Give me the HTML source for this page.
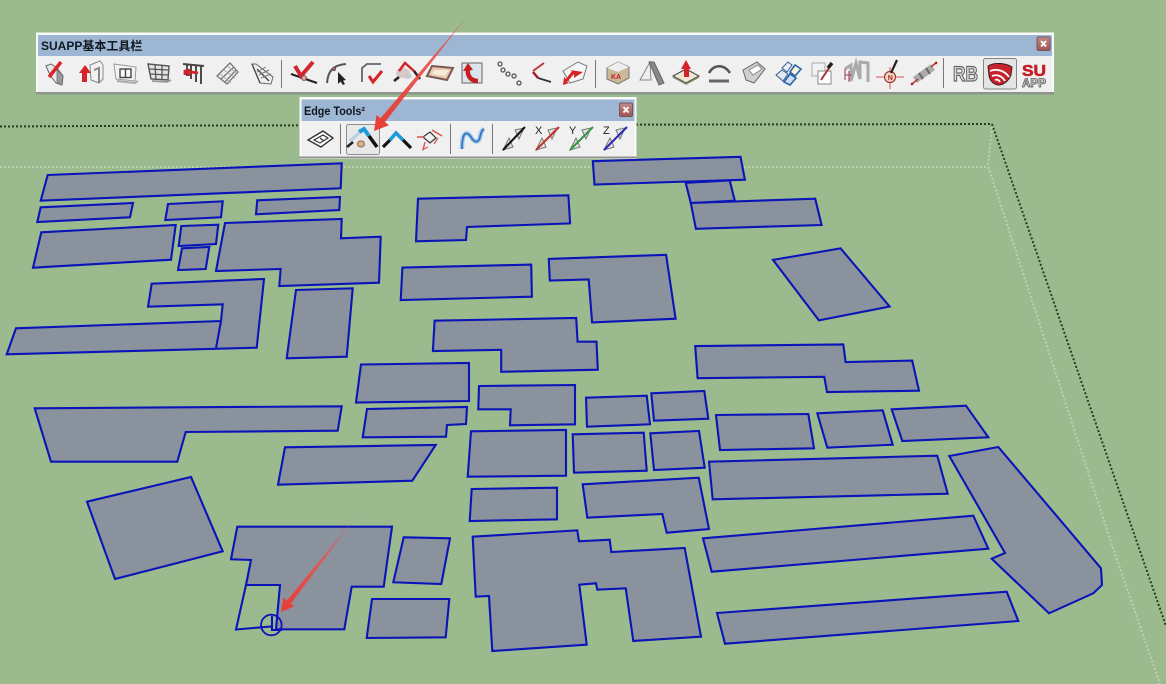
<!DOCTYPE html>
<html><head><meta charset="utf-8"><title>SUAPP</title>
<style>
html,body{margin:0;padding:0;background:#9bbb8f;width:1166px;height:684px;overflow:hidden}
svg{display:block;filter:blur(.35px)}
text{font-family:"Liberation Sans","Noto Sans CJK SC",sans-serif}
.b{fill:#8a939d;stroke:#0a14b8;stroke-width:2.100;stroke-linejoin:miter}
.l{fill:none;stroke:#0a14b8;stroke-width:2.100}
</style></head><body>
<svg width="1166" height="684" viewBox="0 0 1166 684" xmlns="http://www.w3.org/2000/svg">
<defs>
<linearGradient id="a1" gradientUnits="userSpaceOnUse" x1="470" y1="13" x2="374" y2="131"><stop offset="0" stop-color="#e8504a" stop-opacity=".35"/><stop offset=".35" stop-color="#e8504a" stop-opacity=".9"/><stop offset="1" stop-color="#e83c38"/></linearGradient>
<linearGradient id="a2" gradientUnits="userSpaceOnUse" x1="356" y1="517" x2="281" y2="612"><stop offset="0" stop-color="#e8504a" stop-opacity=".2"/><stop offset=".45" stop-color="#e8504a" stop-opacity=".85"/><stop offset="1" stop-color="#e83c38"/></linearGradient>
<linearGradient id="cl" x1="0" y1="0" x2="0" y2="1"><stop offset="0" stop-color="#c48a88"/><stop offset="1" stop-color="#a5524f"/></linearGradient>
</defs>
<rect width="1166" height="684" fill="#9bbb8f"/>

<!-- ground lines -->
<g fill="none" stroke-width="2" stroke-dasharray="2 2">
<path d="M0 167H988" stroke="#bdd2ad"/>
<path d="M992 127L988 166L1112 545L1160 684" stroke="#bdd2ad"/>
<path d="M0 126.500L200 125.500L992 124" stroke="#22401f"/>
<path d="M992 124L1166 626" stroke="#22401f"/>
</g>

<!-- buildings -->
<polygon class="b" points="47.700,175 341.700,163.300 340.700,188.300 40.700,200.700"/>
<polygon class="b" points="40.700,207.300 133,203 130,217.300 37.300,222"/>
<polygon class="b" points="168,204 222.700,201.300 221,217.300 165.300,220"/>
<polygon class="b" points="257.300,200.300 340,197 339.300,210 256,214.300"/>
<polygon class="b" points="41.300,232.300 175.700,225 171,259.700 33,267.700"/>
<polygon class="b" points="181.300,226 218.300,224.700 216,244 178.700,246"/>
<polygon class="b" points="182,248.300 209.300,247 205.700,269 178,270"/>
<polygon class="b" points="225,223 341.700,219 341,238.300 380.700,236.700 379,282.700 279.300,286 280.700,269 216,271"/>
<polygon class="b" points="151.700,283.700 264,279 256.700,347.700 6.700,354.300 16,328.300 221,321 222.700,304.300 148,306.700"/>
<path class="l" d="M221 321L216 348.300"/>
<polygon class="b" points="296,290 352.700,288.300 346.700,356.700 286.700,358.300"/>
<polygon class="b" points="592.800,161.200 740.500,156.800 744.900,179.700 594.500,184.500"/>
<polygon class="b" points="685.700,182.800 729.700,180.400 734.800,200.700 690.800,203"/>
<polygon class="b" points="690.800,203 815.200,198.700 821.600,225 695.900,228.800"/>
<polygon class="b" points="418,198.700 568.400,195.300 570.100,223.400 467,227 466,240 416,241.300"/>
<polygon class="b" points="402.400,267.600 531.200,264.600 531.900,296.700 400.700,300.100"/>
<polygon class="b" points="548.800,258.900 666.100,254.800 675.600,318.700 592.100,322.400 588.700,279.500 549.800,280.500"/>
<polygon class="b" points="434.600,320.700 576.200,318 577.600,341.700 596.500,341.700 597.800,369.700 501.200,371.800 501.200,349.800 432.900,351.100"/>
<polygon class="b" points="773,259.900 840.600,248.400 889.600,306.500 818.900,320.400"/>
<polygon class="b" points="695.200,346.100 843.300,344.400 845.600,362 912.200,360.600 919,390.700 827,392 824.300,376.800 697.600,378.200"/>
<polygon class="b" points="34.700,408.300 341.700,406.300 337.700,430.700 185.700,432 177.300,461.700 51,461.700"/>
<polygon class="b" points="361,364.500 469,363 469,401 356,402.500"/>
<polygon class="b" points="367,409 467,407 466,424 447,425 446,436.700 362.700,437.300"/>
<polygon class="b" points="285,447.300 435.700,445 412.300,480.700 278,484.700"/>
<polygon class="b" points="87,501.700 191,477 222.700,551.300 115,579"/>
<polygon class="b" points="237.300,526.700 392,526.700 383.700,586.700 351.700,586.700 344.300,629.300 281.700,629.300 276,629.300 280,585 246,585 251,560 231,559.300"/>
<path class="l" d="M246 585L236 629.500L271 626.500M272 616V630H282"/>
<circle cx="271.300" cy="625" r="10.300" fill="none" stroke="#0a14b8" stroke-width="1.800"/>
<polygon class="b" points="403.700,537.300 450,538.300 441.300,584 393.300,582.300"/>
<polygon class="b" points="372,599 449.300,599 445.700,637.300 366.700,638"/>
<polygon class="b" points="479,386 575,385 575,424.300 510,425.300 510.700,409.300 478.300,409.300"/>
<polygon class="b" points="586,397.700 646.700,395.700 650,424.300 587,426.700"/>
<polygon class="b" points="651.300,393.300 704.300,391 708.300,418.700 654,420.700"/>
<polygon class="b" points="471,431.300 566,430 566,475.700 467.700,476.700"/>
<polygon class="b" points="572.700,434.300 643.700,432.700 646.700,470.700 574,472.700"/>
<polygon class="b" points="650.300,433.300 699,431 704.700,467.700 654,470"/>
<polygon class="b" points="471.700,489 557,487.700 557,519.300 469.700,521"/>
<polygon class="b" points="582.700,484.300 698.700,477.700 709,529 666.700,532.700 662.300,514 587.300,517.700"/>
<polygon class="b" points="472.700,536.700 577.300,530.300 579,541.300 609.700,539.700 611.300,552 684.700,548 701,636.700 633.300,641 625.700,588.300 597.300,589.700 596,583.300 579.300,584.700 586.700,644.700 492.300,651 489,596 475.700,596.700"/>
<polygon class="b" points="716,415 808.300,414 814,448.300 720,450"/>
<polygon class="b" points="817.300,413.300 882.700,410.300 892.700,444.700 827.300,447.700"/>
<polygon class="b" points="891.700,409.300 966,405.700 988.300,437.300 902.300,441"/>
<polygon class="b" points="709,461.700 937.300,455.700 947.700,493.700 712.700,499.300"/>
<polygon class="b" points="703,538.300 973.300,515.700 988.300,548.700 711.700,571.700"/>
<polygon class="b" points="717,613 1006.700,591.700 1018.300,621 725,643.700"/>
<polygon class="b" points="949.300,456 998.300,447 1101,568.300 1102,585 1093.300,593.300 1049,613.300 991.700,558.700 1005,553"/>

<!-- toolbar 1 -->
<rect x="36" y="32.500" width="1018" height="62" fill="#fafafa"/>
<rect x="38" y="35" width="1014" height="21" fill="#9db6d3"/>
<rect x="38" y="56" width="1014" height="36" fill="#f0f0f0"/>
<rect x="36" y="92" width="1018" height="2.500" fill="#8e948c"/>
<text x="41" y="50" font-size="12" font-weight="700" fill="#101820">SUAPP基本工具栏</text>
<rect x="1037" y="37" width="13" height="13.500" rx="1.500" fill="url(#cl)" stroke="#6b5a5a"/>
<path d="M1041 41l5 5.500M1046 41l-5 5.500" stroke="#fff" stroke-width="1.800"/>
<path d="M281.500 60V88M595.500 60V88M943.500 58V88" stroke="#777" stroke-width="1"/>

<!-- toolbar 1 icons -->
<g transform="translate(57,73)"><polygon points="-11,-7 -6,-9 0,-5 6,3 5,12 -1,10 -7,2" fill="#e8e8e8" stroke="#666"/><polygon points="0,-4 6,3 5,12 0,9" fill="#999" stroke="#666" stroke-width=".7"/><path d="M-8 4L4 -11" stroke="#d9262b" stroke-width="3.500"/></g>
<g transform="translate(91,73)"><polygon points="-1,-8 9,-12 12,-8 12,6 8,10 0,7" fill="#f2f2f2" stroke="#888"/><path d="M3 -3L8 -5V10" fill="none" stroke="#888" stroke-width="2"/><polygon points="-6,-8 -12,0 -9,0 -9,9 -4,9 -4,0 0,0" fill="#d4232a"/></g>
<g transform="translate(125,73)"><polygon points="-11,-9 11,-6 10,8 -9,6" fill="#f3f3f3" stroke="#999"/><rect x="-5" y="-4" width="11" height="8.500" fill="#f8f8f8" stroke="#444" stroke-width="1.400"/><path d="M0.500 -4V4" stroke="#444" stroke-width="1.400"/><path d="M-8 8L10 10L13 8" stroke="#aaa" stroke-width="2" fill="none"/></g>
<g transform="translate(159,73)"><polygon points="-11,-9 10,-7 9,7 -8,6" fill="#e4e4e4" stroke="#555" stroke-width="1.400"/><path d="M-4 -8.500L-3 7M3 -8L3 7M-10 -4L10 -3M-9 1L9.500 2" stroke="#555" stroke-width="1.300"/><path d="M-7 8L8 9L12 7" stroke="#999" stroke-width="1.800" fill="none"/></g>
<g transform="translate(193,73)"><path d="M-10 -9L11 -7M-6 -9V3M-2 -8V6M3 -7V9M8 -7V11" stroke="#444" stroke-width="1.900" fill="none"/><path d="M-9 -2L5 0M-4 -4V3M-8 -3V2" stroke="#d4232a" stroke-width="2.800" fill="none"/></g>
<g transform="translate(228,73)"><polygon points="-11,3 2,-10 10,-1 -1,11" fill="#f0f0f0" stroke="#777" stroke-width="1.300"/><path d="M-7 6L6 -6M-3 9L8 -3" stroke="#777" stroke-width="1.300" fill="none"/><path d="M-8 1L3 10M-4 -3L7 5M-1 -7L10 1" stroke="#aaa" fill="none"/></g>
<g transform="translate(262,73)"><polygon points="-10,-9 -6,-9 11,4 9,11 -2,10" fill="#efefef" stroke="#666"/><path d="M-10 -9L-2 10M-5 -4L7 8" stroke="#444" stroke-width="1.300" fill="none"/><path d="M-3 2L7 -3M-1 5L9 1M-5 -1L4 -6" stroke="#777" fill="none"/></g>

<g transform="translate(304,73)"><path d="M-13 1L13 10" stroke="#222" stroke-width="2"/><path d="M-9 -7L-3 3L9 -11" stroke="#d4232a" stroke-width="4" fill="none"/><circle cx="0" cy="5" r="2.500" fill="#d9a0a0" stroke="#644" stroke-width=".8"/></g>
<g transform="translate(338,73)"><path d="M-11 10C-10 -2 -5 -8 8 -9" stroke="#555" stroke-width="2" fill="none"/><circle cx="-4" cy="-4" r="1.800" fill="#a66" stroke="#444" stroke-width=".6"/><polygon points="0,-1 0,11 2.500,8.500 5,12 7,11 5,7.500 8,7" fill="#222"/></g>
<g transform="translate(372,73)"><path d="M-10 9V-5L-5 -9H9" stroke="#666" stroke-width="1.800" fill="none"/><path d="M-3 3L1 9L10 -2" stroke="#d4232a" stroke-width="3" fill="none"/></g>
<g transform="translate(406,73)"><ellipse cx="-3" cy="0" rx="7" ry="5" fill="#d8c8c8"/><ellipse cx="2" cy="3" rx="4" ry="3" fill="#ccc"/><path d="M-12 8L-7 4" stroke="#222" stroke-width="2.500"/><path d="M-7 -2L-1 -10L8 -2" stroke="#d4232a" stroke-width="2.500" fill="none"/><path d="M8 -2L14 6" stroke="#222" stroke-width="2.500"/></g>
<g transform="translate(440,73)"><polygon points="-8,-7 13,-5 7,7 -13,3" fill="#e9c9b4" stroke="#7a5a50" stroke-width="2"/><polygon points="-6,-3 9,-3 5,3 -8,1" fill="#f6ead9"/></g>
<g transform="translate(473,73)"><rect x="-11" y="-10" width="20" height="20" fill="#dce4ee" stroke="#666"/><path d="M5 8C-3 8 -6 2 -5 -4" stroke="#c41e20" stroke-width="4.500" fill="none"/><polygon points="-10,-2 -5,-10 0,-3" fill="#c41e20"/></g>
<g transform="translate(508,73)" fill="#eee" stroke="#555" stroke-width="1.300"><circle cx="-8" cy="-9" r="2"/><circle cx="-5" cy="-3" r="2"/><circle cx="0" cy="1" r="2"/><circle cx="6" cy="3" r="2"/><circle cx="11" cy="10" r="2"/></g>
<g transform="translate(541,73)"><path d="M3 -10L-8 -2" stroke="#c03030" stroke-width="1.800"/><path d="M-8 -1L-3 5" stroke="#a01c20" stroke-width="2.400"/><path d="M-3 5L10 9" stroke="#333" stroke-width="1.800"/></g>
<g transform="translate(575,73)"><polygon points="-12,-2 3,-11 12,-7 8,6 -5,10" fill="#f6f6f6" stroke="#777"/><polygon points="8,-1 -1,5 -1,1 -8,9 -6,10 -12,12 -11,4 -9,6 -3,-2 -5,-3" fill="#d4232a"/></g>

<g transform="translate(618,73)"><polygon points="-11,-5 0,-11 11,-6 11,5 0,11 -11,6" fill="#c9b89a" stroke="#777"/><polygon points="-11,-5 0,-11 11,-6 0,-1" fill="#eee"/><text x="-7" y="6" font-size="7" font-weight="700" fill="#c41e20">KA</text></g>
<g transform="translate(652,73)"><polygon points="-2,-11 -12,7 -1,7" fill="#eee" stroke="#888"/><polygon points="-3,-11 2,-11 12,10 7,12" fill="#888" stroke="#666"/></g>
<g transform="translate(686,73)"><polygon points="-13,3 0,-4 13,3 0,10" fill="#efe6d3" stroke="#444"/><path d="M-13 4L0 11L13 4" stroke="#886" stroke-width="1.500" fill="none"/><polygon points="0,-13 -5,-4 -2,-4 -2,4 3,4 3,-4 5,-4" fill="#d4232a"/></g>
<g transform="translate(719,73)"><path d="M-10 0C-5 -9 5 -9 11 0" stroke="#555" stroke-width="2.500" fill="none"/><path d="M-10 8H10" stroke="#666" stroke-width="3"/></g>
<g transform="translate(754,73)"><polygon points="-11,-3 3,-11 11,-4 0,10 -8,7" fill="#d0d0d0" stroke="#666"/><polygon points="-5,-3 4,-8 8,-4 -1,2" fill="#fff" stroke="#888"/></g>
<g transform="translate(788,73)"><polygon points="-12,2 -6,-3 0,1 -5,8" fill="#dfe8ee" stroke="#3b5f90"/><polygon points="-6,-5 0,-11 4,-8 -1,-1" fill="#e8eef4" stroke="#3b5f90"/><polygon points="2,-1 7,-8 13,-4 7,3" fill="#fff7d8" stroke="#2b62b0" stroke-width="1.600"/><polygon points="-4,9 2,1 8,5 2,12" fill="#cfe0f2" stroke="#2b62b0" stroke-width="1.600"/></g>
<g transform="translate(822,73)"><rect x="-10" y="-10" width="13" height="13" fill="#f2f2f2" stroke="#aaa"/><rect x="-4" y="-2" width="13" height="13" fill="#fff" stroke="#888"/><path d="M-1 7L7 -5" stroke="#a33" stroke-width="2"/><path d="M6 -5L10 -10" stroke="#222" stroke-width="3.500"/></g>
<g transform="translate(856,73)"><path d="M-11 -4L-5 -8V8L0 -10L4 6L4 -11L12 -10V9" stroke="#aaa" stroke-width="3" fill="none"/><path d="M-11 -4V7M-7 -2V9M-11 2L-4 2" stroke="#a56" stroke-width="1.200" fill="none"/></g>
<g transform="translate(890,73)"><path d="M-14 4H14M0 -6V16" stroke="#d9534f" stroke-width="1"/><circle cx="0" cy="4" r="5.500" fill="#e8dcc8" stroke="#a33" stroke-width="1.200"/><text x="-2.300" y="7" font-size="7" font-weight="700" fill="#b22">N</text><path d="M1 0L7 -13" stroke="#222" stroke-width="2.200"/></g>
<g transform="translate(924,73)"><path d="M-9 7L9 -6" stroke="#aaa" stroke-width="7"/><path d="M-12 11L-6 6M7 -6L13 -11" stroke="#b33" stroke-width="1.500"/><path d="M-5 0L-1 6M2 -5L6 1" stroke="#666" stroke-width="2"/><circle cx="-12" cy="11" r="1.300" fill="#a22"/><circle cx="12" cy="-10" r="1.300" fill="#a22"/></g>

<text x="953" y="81" font-size="21" font-weight="700" fill="#ddd" stroke="#666" stroke-width="1.200" textLength="25" lengthAdjust="spacingAndGlyphs">RB</text>
<rect x="983.500" y="58.500" width="33" height="30.500" rx="2" fill="#e4e4e4" stroke="#858585"/>
<g transform="translate(1000,74)"><path d="M-12 -8C-6 -12 6 -11 12 -7L11 1C9 7 3 11 -1 11C-6 11 -10 7 -11 2Z" fill="#c8222c" stroke="#3a1518" stroke-width=".9"/><path d="M-10 -3C-3 -6 5 -3 9 3M-8 2C-3 0 2 2 5 7M-5 6C-3 5 -1 6 0 8" stroke="#fff" stroke-width="1.800" fill="none"/></g>
<text x="1022" y="76" font-size="16" font-weight="700" fill="#c41e24" textLength="24" lengthAdjust="spacingAndGlyphs" stroke="#c41e24" stroke-width=".6">SU</text>
<text x="1022" y="87" font-size="11.500" font-weight="700" fill="#eee" stroke="#555" stroke-width=".8" textLength="24" lengthAdjust="spacingAndGlyphs">APP</text>

<!-- toolbar 2 -->
<rect x="299.500" y="97" width="337" height="62" fill="#fafafa"/>
<rect x="301.500" y="99.500" width="333" height="21.500" fill="#9db6d3"/>
<rect x="301.500" y="121" width="333" height="35.500" fill="#f0f0f0"/>
<rect x="299.500" y="156.500" width="337" height="2" fill="#8e948c"/>
<text x="304" y="115" font-size="11.500" font-weight="700" fill="#101820" textLength="61" lengthAdjust="spacingAndGlyphs">Edge Tools²</text>
<rect x="619.500" y="103" width="13" height="13.500" rx="1.500" fill="url(#cl)" stroke="#6b5a5a"/>
<path d="M623.500 107l5 5.500M628.500 107l-5 5.500" stroke="#fff" stroke-width="1.800"/>
<path d="M340.500 124V154M450.500 124V154M492.500 124V154" stroke="#777"/>
<rect x="346.500" y="124.500" width="33" height="30" rx="2" fill="#e8e8e8" stroke="#8f8f8f"/>

<g transform="translate(321,139)"><path d="M-13 1L2 -8L12 -1L0 8Z" fill="#fff" stroke="#333" stroke-width="1.400"/><path d="M-7 1L2 -4L7 -1L-1 4ZM-1 -1L3 2" fill="none" stroke="#333" stroke-width="1.200"/></g>
<g transform="translate(362,139)"><path d="M-12 2L-3 -6" stroke="#b9cfe4" stroke-width="3"/><path d="M-3 -7L2 -10L7 -3" stroke="#1e9bd7" stroke-width="4" fill="none"/><path d="M7 -3L15 8" stroke="#111" stroke-width="3.500"/><path d="M-15 8L-9 3" stroke="#222" stroke-width="2.500"/><ellipse cx="-1" cy="5" rx="3.500" ry="3" fill="#dcb47e" stroke="#865"/></g>
<g transform="translate(397,139)"><path d="M-14 8L-7 1" stroke="#111" stroke-width="3.200"/><path d="M-7 1L-1 -6L6 1" stroke="#1e9bd7" stroke-width="3.600" fill="none"/><path d="M6 1L14 9" stroke="#111" stroke-width="3.200"/></g>
<g transform="translate(430,139)"><path d="M-7 -2L0 -7L6 -1L0 4Z" fill="none" stroke="#333" stroke-width="1.200"/><path d="M-13 -2H-6M-5 3L-7 11M2 -9L12 -3" stroke="#d9534f" stroke-width="1.400" fill="none"/><path d="M-8 11L-2 8M8 -1L4 5" stroke="#d9534f" stroke-width="1.200"/></g>
<g transform="translate(473,139)"><path d="M-11 10C-11 -8 -6 -8 -2 -2C2 5 6 3 7 -2C8 -7 9 -9 11 -10" stroke="#9fc6e8" stroke-width="4.500" fill="none"/><path d="M-11 10C-11 -8 -6 -8 -2 -2C2 5 6 3 7 -2C8 -7 9 -9 11 -10" stroke="#2a6fc0" stroke-width="1.600" fill="none"/></g>
<g transform="translate(514,139)"><polygon points="-11,11 -5,-1 -1,8" fill="#ddd" stroke="#777"/><polygon points="1,-9 10,-11 5,0" fill="#ddd" stroke="#777"/><path d="M-11 11L11 -12" stroke="#111" stroke-width="2"/></g>
<g transform="translate(548,139)"><polygon points="-12,11 -6,-1 -2,8" fill="#e4e4e4" stroke="#777"/><polygon points="0,-9 9,-11 4,0" fill="#e4e4e4" stroke="#777"/><path d="M-12 11L11 -12" stroke="#c0342c" stroke-width="2"/><text x="-13" y="-5" font-size="11" fill="#222">X</text></g>
<g transform="translate(582,139)"><polygon points="-12,11 -6,-1 -2,8" fill="#e4e4e4" stroke="#777"/><polygon points="0,-9 9,-11 4,0" fill="#e4e4e4" stroke="#777"/><path d="M-12 11L11 -12" stroke="#2f9a3e" stroke-width="2"/><text x="-13" y="-5" font-size="11" fill="#222">Y</text></g>
<g transform="translate(616,139)"><polygon points="-12,11 -6,-1 -2,8" fill="#e4e4e4" stroke="#777"/><polygon points="0,-9 9,-11 4,0" fill="#e4e4e4" stroke="#777"/><path d="M-12 11L11 -12" stroke="#2a2ab0" stroke-width="2"/><text x="-13" y="-5" font-size="11" fill="#222">Z</text></g>

<!-- arrows -->
<polygon points="470,13 385,122 389,125.200 374,131 376.500,115 380.500,118.200" fill="url(#a1)"/>
<polygon points="356,517 291,603.500 294.500,606.200 281,612 283.500,597.500 287,600.300" fill="url(#a2)"/>
</svg>
</body></html>
